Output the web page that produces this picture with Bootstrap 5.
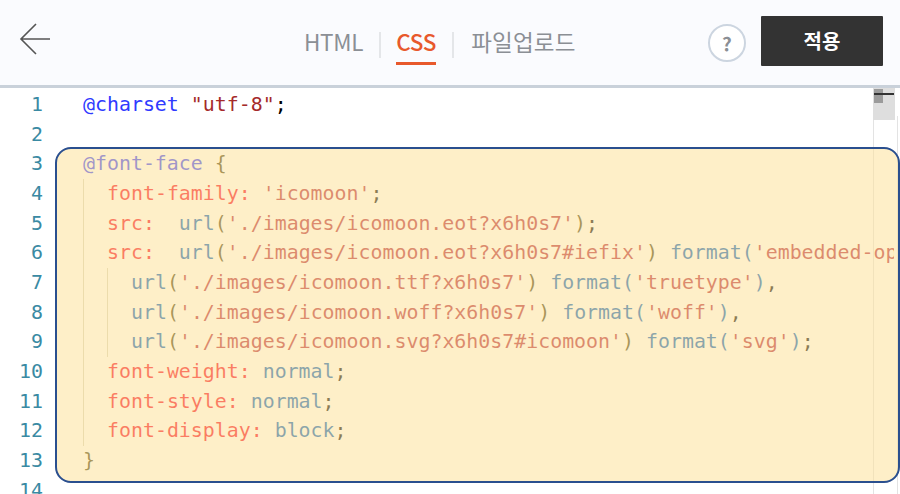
<!doctype html>
<html lang="ko"><head><meta charset="utf-8"><title>CSS</title>
<link href="https://cdn.jsdelivr.net/npm/bootstrap@5.3.0/dist/css/bootstrap.min.css" rel="stylesheet">
<style>
html,body{height:494px;overflow:hidden;background:#fff}
.topbar{height:88px;background:#fafbfe;border-bottom:3px solid #c9d1da;font-family:"Noto Sans CJK KR","Noto Sans",sans-serif;padding:0 17px 0 19px}
.backbtn{width:32px;height:34px;margin-top:-8px}
.tabset{margin-left:253px;margin-top:4px;font-size:22.5px;color:#8b8f95}
.tabitem{padding:0;line-height:30px;height:37px;letter-spacing:-.3px}
.tabitem.ko{letter-spacing:.2px}
.tabitem.onn{color:#e8592c;font-weight:500;border-bottom:3px solid #e8592c;height:39px;margin-top:2px}
.tabsep{width:2px;height:26px;background:#e4e6e9;margin:0 15px 0 16px}
.tabsep.wide{margin:0 17px 0 16px}
.helpbtn{width:38px;height:38px;border:2px solid #ccd5e0;border-radius:50%;color:#8b8f95;font-weight:700;font-size:19px;background:#fff;margin-right:15px;line-height:1}
.applybtn{width:122px;height:50px;background:#333;color:#fff;border-radius:1px;font-size:20px;font-weight:700;border:0;margin-top:-3px;padding:0}
.editor{height:406px;overflow:hidden;position:relative}
.codewrap{font-family:"DejaVu Sans Mono",monospace;font-size:19.9px;line-height:29.67px;color:#333;margin-top:2px}
.cline{height:29.67px}
.lno{width:43px;flex:none;text-align:right;color:#3a8aa3;margin-right:40px}
.lcode{width:811px;flex:none;overflow:hidden;white-space:pre}
.gd{display:inline-block;width:24px;height:29.67px;border-left:1px solid #d8d4c0;vertical-align:top}
.k1{color:#2f3aff}.s1{color:#a52a2a}.a1{color:#f70221}.v1{color:#005bbd}.s2{color:#b42337}.p1{color:#000}.b1{color:#453a0b}
.hl{position:absolute;left:55px;top:59px;width:845px;height:336px;border:2px solid #2a4f8f;border-radius:16px;background:rgba(253,226,155,.55)}
.sbline{position:absolute;left:873px;top:0;bottom:0;width:1px;background:#e3e3e3}
.sbthumb{position:absolute;left:873px;top:0;width:22px;height:32px;background:#dedede}
.sbmark{position:absolute;left:874px;top:1px;width:9px;height:14px;background:#9b9b9b}
.sbbar{position:absolute;left:874px;top:5px;width:20px;height:2px;background:#333}
.sbedge{position:absolute;left:897px;top:28px;bottom:0;width:1px;background:#e3e3e3}
</style></head><body>
<div class="topbar d-flex align-items-center">
 <div class="backbtn"><svg width="32" height="34" viewBox="0 0 32 34" fill="none" stroke="#555" stroke-width="1.6"><path d="M2 17H31M17 2 2 17 17 32"/></svg></div>
 <div class="tabset d-flex align-items-center">
  <div class="tabitem">HTML</div><div class="tabsep"></div>
  <div class="tabitem onn">CSS</div><div class="tabsep wide"></div>
  <div class="tabitem ko">파일업로드</div>
 </div>
 <div class="ms-auto d-flex align-items-center">
  <div class="helpbtn d-flex align-items-center justify-content-center">?</div>
  <button class="applybtn">적용</button>
 </div>
</div>
<div class="editor">
 <div class="codewrap">
<div class="cline d-flex"><div class="lno">1</div><div class="lcode"><span class="k1">@charset</span> <span class="s1">"utf-8"</span><span class="p1">;</span></div></div>
<div class="cline d-flex"><div class="lno">2</div><div class="lcode"></div></div>
<div class="cline d-flex"><div class="lno">3</div><div class="lcode"><span class="k1">@font-face</span> <span class="b1">{</span></div></div>
<div class="cline d-flex"><div class="lno">4</div><div class="lcode"><span class="gd"></span><span class="a1">font-family:</span> <span class="s2">'icomoon'</span><span class="p1">;</span></div></div>
<div class="cline d-flex"><div class="lno">5</div><div class="lcode"><span class="gd"></span><span class="a1">src:</span>  <span class="v1">url</span><span class="b1">(</span><span class="s2">'./images/icomoon.eot?x6h0s7'</span><span class="b1">)</span><span class="p1">;</span></div></div>
<div class="cline d-flex"><div class="lno">6</div><div class="lcode"><span class="gd"></span><span class="a1">src:</span>  <span class="v1">url</span><span class="b1">(</span><span class="s2">'./images/icomoon.eot?x6h0s7#iefix'</span><span class="b1">)</span> <span class="v1">format(</span><span class="s2">'embedded-op</span></div></div>
<div class="cline d-flex"><div class="lno">7</div><div class="lcode"><span class="gd"></span><span class="gd"></span><span class="v1">url</span><span class="b1">(</span><span class="s2">'./images/icomoon.ttf?x6h0s7'</span><span class="b1">)</span> <span class="v1">format(</span><span class="s2">'truetype'</span><span class="v1">)</span><span class="p1">,</span></div></div>
<div class="cline d-flex"><div class="lno">8</div><div class="lcode"><span class="gd"></span><span class="gd"></span><span class="v1">url</span><span class="b1">(</span><span class="s2">'./images/icomoon.woff?x6h0s7'</span><span class="b1">)</span> <span class="v1">format(</span><span class="s2">'woff'</span><span class="v1">)</span><span class="p1">,</span></div></div>
<div class="cline d-flex"><div class="lno">9</div><div class="lcode"><span class="gd"></span><span class="gd"></span><span class="v1">url</span><span class="b1">(</span><span class="s2">'./images/icomoon.svg?x6h0s7#icomoon'</span><span class="b1">)</span> <span class="v1">format(</span><span class="s2">'svg'</span><span class="v1">)</span><span class="p1">;</span></div></div>
<div class="cline d-flex"><div class="lno">10</div><div class="lcode"><span class="gd"></span><span class="a1">font-weight:</span> <span class="v1">normal</span><span class="p1">;</span></div></div>
<div class="cline d-flex"><div class="lno">11</div><div class="lcode"><span class="gd"></span><span class="a1">font-style:</span> <span class="v1">normal</span><span class="p1">;</span></div></div>
<div class="cline d-flex"><div class="lno">12</div><div class="lcode"><span class="gd"></span><span class="a1">font-display:</span> <span class="v1">block</span><span class="p1">;</span></div></div>
<div class="cline d-flex"><div class="lno">13</div><div class="lcode"><span class="b1">}</span></div></div>
<div class="cline d-flex"><div class="lno">14</div><div class="lcode"></div></div>
 </div>
 <div class="sbline"></div><div class="sbthumb"></div><div class="sbmark"></div><div class="sbbar"></div><div class="sbedge"></div>
 <div class="hl"></div>
</div>
</body></html>
